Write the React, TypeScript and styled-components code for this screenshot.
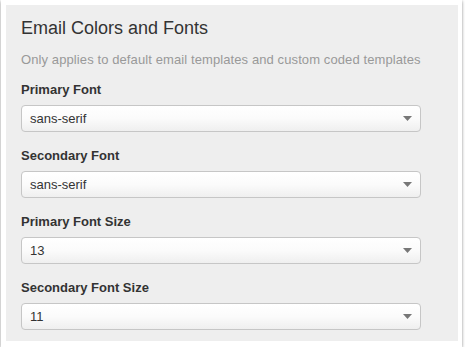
import { FC } from 'react';
import styled, { createGlobalStyle } from 'styled-components';

const GlobalStyle = createGlobalStyle`
  html, body {
    margin: 0;
    padding: 0;
    background: #fff;
  }
  body {
    font-family: 'Liberation Sans', Arial, sans-serif;
    color: #333;
  }
`;

const fields = [
  { label: 'Primary Font', value: 'sans-serif' },
  { label: 'Secondary Font', value: 'sans-serif' },
  { label: 'Primary Font Size', value: '13' },
  { label: 'Secondary Font Size', value: '11' },
];

const Card = styled.div`
  box-sizing: border-box;
  width: 461px;
  height: 347px;
  margin-left: 1px;
  padding: 5px 4px 6px 5px;
  background: #fff;
  box-shadow: 0 1px 3px rgba(0, 0, 0, 0.45);
`;

const Panel = styled.section`
  box-sizing: border-box;
  height: 100%;
  padding: 13px 15px 0 15px;
  background: #eeeeee;
`;

const Title = styled.h3`
  margin: 0;
  font-size: 18px;
  line-height: 20px;
  font-weight: 400;
  color: #333;
`;

const Hint = styled.p`
  margin: 13px 0 12px;
  font-size: 13px;
  line-height: 18px;
  letter-spacing: 0.1px;
  color: #999;
`;

const Field = styled.div`
  display: flex;
  flex-direction: column;
  gap: 6px;
  & + & {
    margin-top: 15px;
  }
`;

const Label = styled.label`
  font-size: 13px;
  line-height: 18px;
  font-weight: 700;
  color: #333;
`;

const Select = styled.div`
  box-sizing: border-box;
  width: 400px;
  height: 27px;
  display: flex;
  align-items: center;
  justify-content: space-between;
  padding: 0 8px 0 8px;
  border: 1px solid #c6c6c6;
  border-radius: 4px;
  background: linear-gradient(#ffffff 0%, #fbfbfb 50%, #efefef 100%);
  font-size: 13px;
  color: #333;
  > svg {
    display: block;
  }
`;

const Caret: FC = () => (
  <svg width='9' height='5' viewBox='0 0 9 5'>
    <path d='M0 0 H9 L4.5 5 Z' fill='#777' />
  </svg>
);

const App: FC = () => (
  <>
    <GlobalStyle />
    <Card>
      <Panel>
        <Title>Email Colors and Fonts</Title>
        <Hint>Only applies to default email templates and custom coded templates</Hint>
        {fields.map((f) => (
          <Field key={f.label}>
            <Label>{f.label}</Label>
            <Select>
              <span>{f.value}</span>
              <Caret />
            </Select>
          </Field>
        ))}
      </Panel>
    </Card>
  </>
);

export default App;
